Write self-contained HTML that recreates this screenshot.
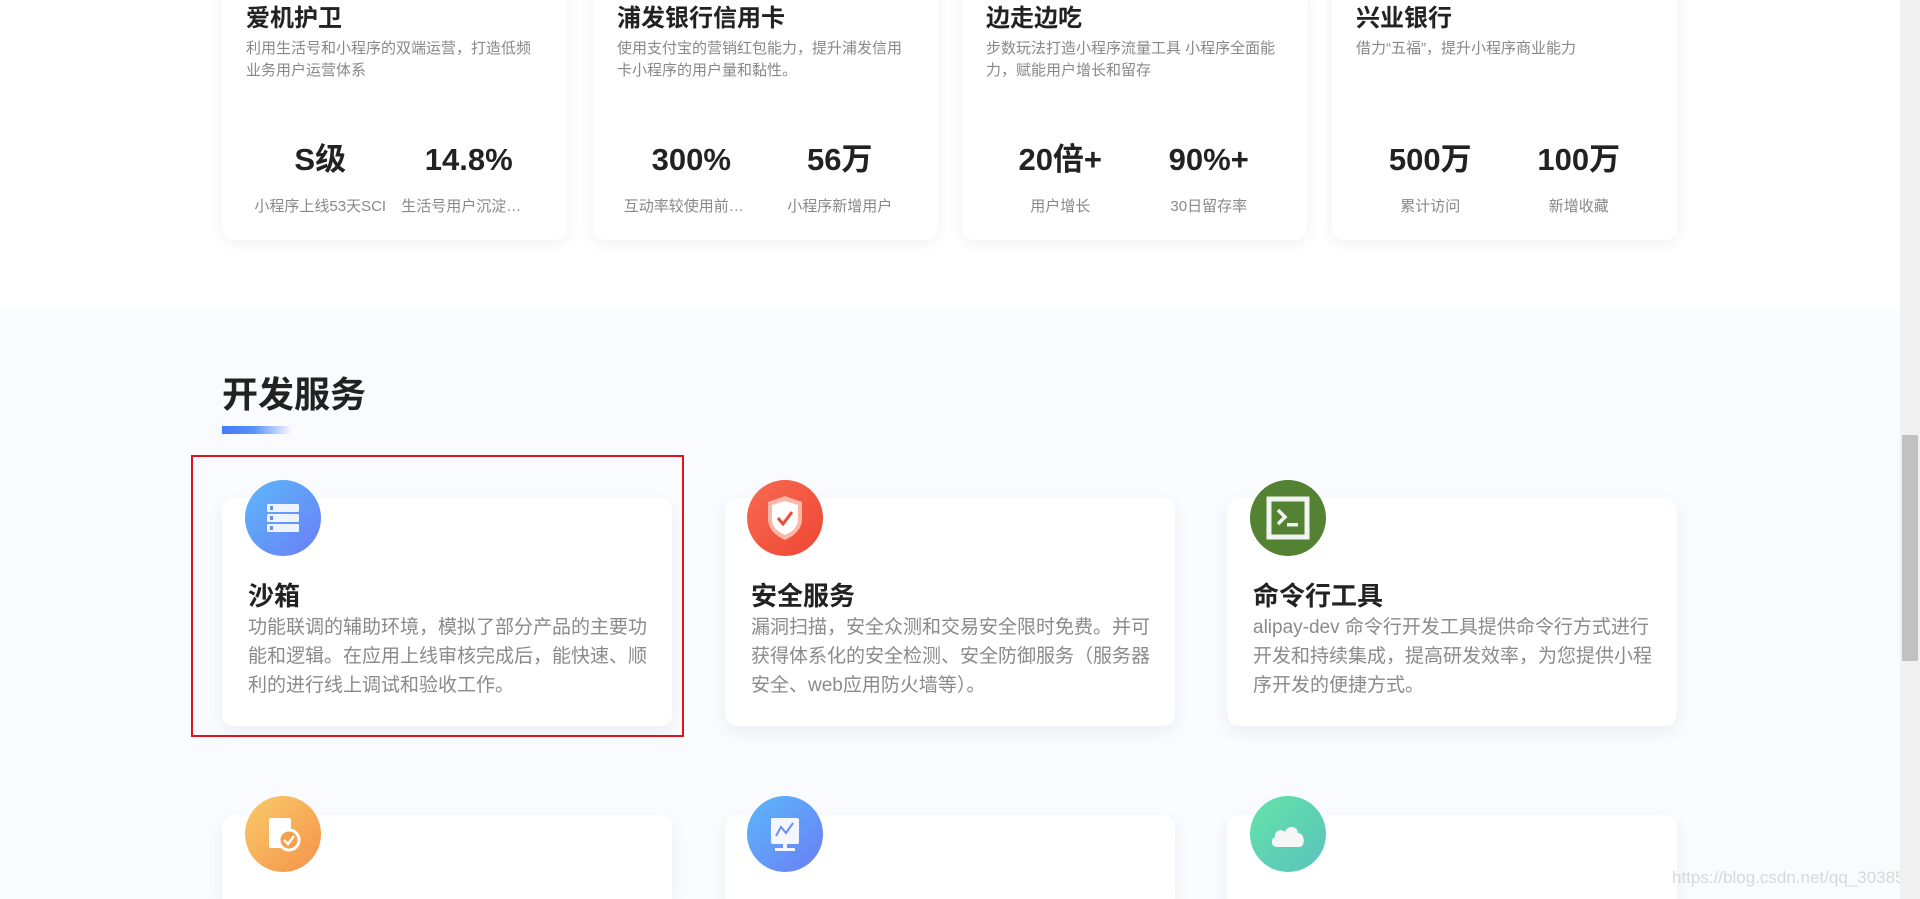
<!DOCTYPE html>
<html style="width:1920px;height:899px;overflow:hidden"><head><meta charset="utf-8">
<style>
*{margin:0;padding:0;box-sizing:border-box}
body{width:1920px;height:899px;overflow:hidden;background:#fff;font-family:"Liberation Sans","Noto Sans CJK SC",sans-serif;position:relative}
.top{position:absolute;left:0;top:0;width:1900px;height:310px;background:#fff}
.tc{position:absolute;top:-20px;width:345px;height:260px;background:#fff;border-radius:12px;box-shadow:0 4px 16px rgba(0,0,0,0.06)}
.tc h3{position:absolute;top:22px;left:24px;font-size:24px;font-weight:bold;color:#222;line-height:34px}
.tc p{position:absolute;top:58px;left:24px;right:24px;font-size:15px;color:#888;line-height:22px}
.st{position:absolute;top:160px;left:24px;right:24px;display:flex}
.st div{flex:1;text-align:center;overflow:hidden}
.st b{display:block;font-size:31px;color:#222;line-height:40px}
.st span{display:block;margin:15px auto 0;max-width:135px;font-size:15px;color:#888;white-space:nowrap;overflow:hidden;text-overflow:ellipsis}
.gray{position:absolute;left:0;top:310px;width:1900px;height:589px;background:#f9fbfe}
h2{position:absolute;left:222px;top:372px;font-size:36px;font-weight:bold;color:#222;line-height:46px}
.bar{position:absolute;left:222px;top:426px;width:70px;height:8px;background:linear-gradient(90deg,#3f7cf7 0%,#5b8ff8 45%,rgba(120,160,250,0) 100%)}
.card{position:absolute;width:450px;height:228px;background:#fff;border-radius:12px;box-shadow:0 6px 16px rgba(20,40,90,0.06)}
.card h4{position:absolute;left:26px;top:80px;font-size:26px;font-weight:bold;color:#222;line-height:36px}
.card p{position:absolute;left:26px;top:115px;width:401px;font-size:19px;color:#8a8a8a;line-height:29px}
.ic{position:absolute;width:76px;height:76px;border-radius:50%;display:flex;align-items:center;justify-content:center}
.red{position:absolute;left:191px;top:455px;width:493px;height:282px;border:2px solid #e0141e}
.sb{position:absolute;right:0;top:0;width:20px;height:899px;background:#f1f1f1}
.th{position:absolute;right:2px;top:435px;width:16px;height:226px;background:#c1c1c1}
.wm{position:absolute;left:1672px;top:868px;font-size:17px;color:#d8d8d8;white-space:nowrap}
</style></head><body>
<div class="top">
 <div class="tc" style="left:222px"><h3>爱机护卫</h3><p>利用生活号和小程序的双端运营，打造低频业务用户运营体系</p><div class="st"><div><b>S级</b><span>小程序上线53天SCI</span></div><div><b>14.8%</b><span>生活号用户沉淀转化率</span></div></div></div>
 <div class="tc" style="left:593px"><h3>浦发银行信用卡</h3><p>使用支付宝的营销红包能力，提升浦发信用卡小程序的用户量和黏性。</p><div class="st"><div><b>300%</b><span>互动率较使用前提升明显</span></div><div><b>56万</b><span>小程序新增用户</span></div></div></div>
 <div class="tc" style="left:962px"><h3>边走边吃</h3><p>步数玩法打造小程序流量工具 小程序全面能力，赋能用户增长和留存</p><div class="st"><div><b>20倍+</b><span>用户增长</span></div><div><b>90%+</b><span>30日留存率</span></div></div></div>
 <div class="tc" style="left:1332px"><h3>兴业银行</h3><p>借力“五福”，提升小程序商业能力</p><div class="st"><div><b>500万</b><span>累计访问</span></div><div><b>100万</b><span>新增收藏</span></div></div></div>
</div>
<div class="gray"></div>
<h2>开发服务</h2>
<div class="bar"></div>

<div class="card" style="left:222px;top:498px"><h4>沙箱</h4><p>功能联调的辅助环境，模拟了部分产品的主要功能和逻辑。在应用上线审核完成后，能快速、顺利的进行线上调试和验收工作。</p></div>
<div class="card" style="left:725px;top:498px"><h4>安全服务</h4><p>漏洞扫描，安全众测和交易安全限时免费。并可获得体系化的安全检测、安全防御服务（服务器安全、web应用防火墙等）。</p></div>
<div class="card" style="left:1227px;top:498px"><h4>命令行工具</h4><p>alipay-dev 命令行开发工具提供命令行方式进行开发和持续集成，提高研发效率，为您提供小程序开发的便捷方式。</p></div>
<div class="card" style="left:222px;top:815px;height:84px;border-radius:12px 12px 0 0"></div>
<div class="card" style="left:725px;top:815px;height:84px;border-radius:12px 12px 0 0"></div>
<div class="card" style="left:1227px;top:815px;height:84px;border-radius:12px 12px 0 0"></div>

<div class="ic" style="left:245px;top:480px;background:linear-gradient(135deg,#5cb8fb,#6a7ef5)"><svg width="40" height="40" viewBox="0 0 40 40"><g fill="#eef4ff"><rect x="4" y="6" width="32" height="8" rx="1.5"/><rect x="4" y="16" width="32" height="8" rx="1.5"/><rect x="4" y="26" width="32" height="8" rx="1.5"/></g><g fill="#6a8ef5"><rect x="7" y="8" width="3" height="4"/><rect x="7" y="18" width="3" height="4"/><rect x="7" y="28" width="3" height="4"/></g></svg></div>
<div class="ic" style="left:747px;top:480px;background:linear-gradient(135deg,#f96a4f,#ee4535)"><svg width="44" height="50" viewBox="0 0 44 50"><path d="M22 3 L39 9 V26 C39 36 31 43 22 47 C13 43 5 36 5 26 V9 Z" fill="#fbb7a8"/><path d="M22 8 L35 12 V26 C35 34 29 39 22 42 C15 39 9 34 9 26 V12 Z" fill="#fff"/><path d="M15 25 L20 31 L29 19" stroke="#ef4a3a" stroke-width="3" fill="none"/></svg></div>
<div class="ic" style="left:1250px;top:480px;background:#548233"><svg width="46" height="46" viewBox="0 0 46 46"><rect x="4" y="4" width="38" height="38" fill="none" stroke="#f3f3f3" stroke-width="5"/><path d="M13 15 L20 22 L13 29" stroke="#f3f3f3" stroke-width="3.5" fill="none"/><rect x="22" y="28" width="11" height="3.5" fill="#f3f3f3"/></svg></div>

<div class="ic" style="left:245px;top:796px;background:linear-gradient(135deg,#f9cb6a,#f5924a)"><svg width="40" height="44" viewBox="0 0 40 44"><rect x="6" y="6" width="22" height="30" rx="2" fill="#fff"/><circle cx="26" cy="28" r="10" fill="#f4a04f" stroke="#fff" stroke-width="3"/><path d="M21 28 L25 32 L31 24" stroke="#fff" stroke-width="2.5" fill="none"/></svg></div>
<div class="ic" style="left:747px;top:796px;background:linear-gradient(135deg,#5cb8fb,#6a7ef5)"><svg width="40" height="40" viewBox="0 0 40 40"><rect x="6" y="4" width="28" height="26" rx="2" fill="#f4f7ff"/><path d="M11 22 L16 13 L21 19 L28 9" stroke="#6a8ef5" stroke-width="2" fill="none"/><rect x="18" y="30" width="4" height="4" fill="#f4f7ff"/><rect x="10" y="34" width="20" height="3" fill="#f4f7ff"/></svg></div>
<div class="ic" style="left:1250px;top:796px;background:linear-gradient(135deg,#64e3a8,#5ac2bd)"><svg width="42" height="40" viewBox="0 0 42 40"><path d="M10 33 C4 33 3 25 8 23 C7 17 14 14 18 18 C20 11 30 11 31 19 C38 19 39 33 32 33 Z" fill="#f6f6f6"/></svg></div>

<div class="red"></div>
<div class="wm">https://blog.csdn.net/qq_30385099</div>
<div class="sb"><div class="th"></div></div>
</body></html>
